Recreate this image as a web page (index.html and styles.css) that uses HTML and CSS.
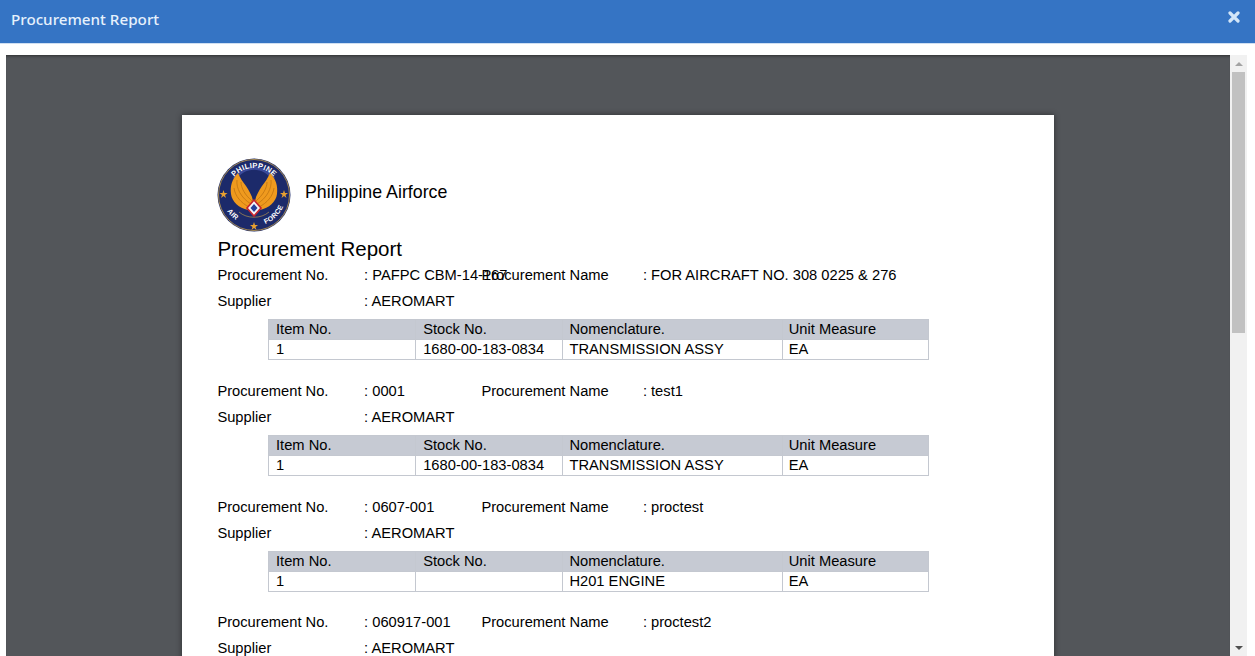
FILE: index.html
```html
<!DOCTYPE html>
<html>
<head>
  <title>Procurement Report</title>
  <link rel="stylesheet" href="styles.css">
</head>
<body>
  <div class="modal-header">
    <span class="modal-title">Procurement Report</span>
    <svg class="close-icon" width="12" height="12" viewBox="0 0 12 12">
      <path d="M2 2 L10 10 M10 2 L2 10" stroke="#d3e6f8" stroke-width="3.2" stroke-linecap="round"/>
    </svg>
  </div>
  <div class="viewer">
    <div class="viewer-area">
      <div class="page">
        <div class="brand">
          <svg class="logo" width="74" height="74" viewBox="0 0 74 74">
            <defs>
              <path id="arcTop" d="M10 37 A26.500 26.500 0 0 1 64 37"/>
              <path id="arcLeft" d="M6 42 A31 31 0 0 0 30 67"/>
              <path id="arcRight" d="M42 67.500 A31 31 0 0 0 68 42"/>
            </defs>
            <circle cx="37" cy="37" r="36.500" fill="#1c2a6a"/>
            <circle cx="37" cy="37" r="35.500" fill="none" stroke="#c9a24a" stroke-width="0.8"/>
            <path d="M16 20 A25 25 0 0 1 58 20 L55 22 A21 21 0 0 0 19 22 Z" fill="#3a4a9a"/>
            <text class="logo-text"><textPath href="#arcTop" startOffset="50%" text-anchor="middle">PHILIPPINE</textPath></text>
            <path d="M22 54 C30 61 44 61 52 54" fill="none" stroke="#c9a24a" stroke-width="0.6"/>
            <path d="M21 15 C15 21 13 28 14 36 C15 44 22 50 31 52 L35 47 L36 43 C35 37 32 33 29 28 C26 24 23 20 21 15 Z" fill="#ef9a1e"/>
            <path d="M53 15 C59 21 61 28 60 36 C59 44 52 50 43 52 L39 47 L38 43 C39 37 42 33 45 28 C48 24 51 20 53 15 Z" fill="#ef9a1e"/>
            <path d="M20 22 C19 30 24 40 34 46 M17 30 C18 38 24 45 32 49 M24 24 C24 30 28 37 35 43 M54 22 C55 30 50 40 40 46 M57 30 C56 38 50 45 42 49 M50 24 C50 30 46 37 39 43" stroke="#b96f10" stroke-width="0.7" fill="none"/>
            <path d="M37 42 L44 50 L37 58 L30 50 Z" fill="#f4f4f8" stroke="#c8242c" stroke-width="1.600"/>
            <path d="M37 46 L40.500 50 L37 54 L33.500 50 Z" fill="#27409a"/>
            <polygon class="star" points="6,33 7,36 10,36 7.500,38 8.500,41 6,39 3.500,41 4.500,38 2,36 5,36" transform="translate(0.500 -1)"/>
            <polygon class="star" points="6,33 7,36 10,36 7.500,38 8.500,41 6,39 3.500,41 4.500,38 2,36 5,36" transform="translate(61 -1)"/>
            <polygon class="star" points="6,33 7,36 10,36 7.500,38 8.500,41 6,39 3.500,41 4.500,38 2,36 5,36" transform="translate(31 31)"/>
            <text class="logo-text small"><textPath href="#arcLeft" startOffset="50%" text-anchor="middle">AIR</textPath></text>
            <text class="logo-text small"><textPath href="#arcRight" startOffset="50%" text-anchor="middle">FORCE</textPath></text>
          </svg>
          <span class="brand-name">Philippine Airforce</span>
        </div>
        <h1 class="report-title">Procurement Report</h1>

        <div class="entry">
          <div class="info-row">
            <span class="lbl">Procurement No.</span><span class="val">: PAFPC CBM-14-167</span>
            <span class="lbl2">Procurement Name</span><span class="val2">: FOR AIRCRAFT NO. 308 0225 &amp; 276</span>
          </div>
          <div class="info-row">
            <span class="lbl">Supplier</span><span class="val">: AEROMART</span>
          </div>
          <table class="items">
            <tr><th class="c1">Item No.</th><th class="c2">Stock No.</th><th class="c3">Nomenclature.</th><th class="c4">Unit Measure</th></tr>
            <tr><td>1</td><td>1680-00-183-0834</td><td>TRANSMISSION ASSY</td><td>EA</td></tr>
          </table>
        </div>

        <div class="entry">
          <div class="info-row">
            <span class="lbl">Procurement No.</span><span class="val">: 0001</span>
            <span class="lbl2">Procurement Name</span><span class="val2">: test1</span>
          </div>
          <div class="info-row">
            <span class="lbl">Supplier</span><span class="val">: AEROMART</span>
          </div>
          <table class="items">
            <tr><th class="c1">Item No.</th><th class="c2">Stock No.</th><th class="c3">Nomenclature.</th><th class="c4">Unit Measure</th></tr>
            <tr><td>1</td><td>1680-00-183-0834</td><td>TRANSMISSION ASSY</td><td>EA</td></tr>
          </table>
        </div>

        <div class="entry">
          <div class="info-row">
            <span class="lbl">Procurement No.</span><span class="val">: 0607-001</span>
            <span class="lbl2">Procurement Name</span><span class="val2">: proctest</span>
          </div>
          <div class="info-row">
            <span class="lbl">Supplier</span><span class="val">: AEROMART</span>
          </div>
          <table class="items">
            <tr><th class="c1">Item No.</th><th class="c2">Stock No.</th><th class="c3">Nomenclature.</th><th class="c4">Unit Measure</th></tr>
            <tr><td>1</td><td></td><td>H201 ENGINE</td><td>EA</td></tr>
          </table>
        </div>

        <div class="entry">
          <div class="info-row">
            <span class="lbl">Procurement No.</span><span class="val">: 060917-001</span>
            <span class="lbl2">Procurement Name</span><span class="val2">: proctest2</span>
          </div>
          <div class="info-row">
            <span class="lbl">Supplier</span><span class="val">: AEROMART</span>
          </div>
        </div>
      </div>
    </div>
    <div class="scrollbar">
      <div class="arrow up"></div>
      <div class="track"><div class="thumb"></div></div>
      <div class="arrow down"></div>
    </div>
  </div>
</body>
</html>
```

FILE: styles.css
```css
html, body {
  height: 100%;
}

body {
  margin: 0;
  background-color: #fff;
  font-family: "Liberation Sans", Arial, sans-serif;
  color: #000;
  display: flex;
  flex-direction: column;
  height: 100vh;
  overflow: hidden;
}

.modal-header {
  flex: none;
  height: 43px;
  background-color: #3574c4;
  border-bottom: 1px solid #cfdff2;
  display: flex;
  align-items: flex-start;
  justify-content: space-between;
  padding: 0 15px 0 11px;
}

.modal-title {
  font-family: "Noto Sans", sans-serif;
  font-size: 15.200px;
  font-weight: 500;
  line-height: 39px;
  color: #e6f1fc;
}

.close-icon {
  margin-top: 11px;
}

.viewer {
  flex: 1;
  min-height: 0;
  display: flex;
  padding: 11px 8px 0 6px;
}

.viewer-area {
  flex: 1;
  background-color: #53565a;
  box-shadow: inset 0 3px 3px -2px rgba(0, 0, 0, 0.45);
  overflow: hidden;
  padding-top: 60px;
}

.page {
  width: 872px;
  margin-left: 176px;
  background-color: #fff;
  box-shadow: 0 0 6px rgba(0, 0, 0, 0.45);
  padding: 43px 0 0 35.400px;
  box-sizing: border-box;
  height: 1000px;
}

.brand {
  display: flex;
  align-items: center;
  height: 74px;
}

.logo {
  flex: none;
  margin-left: -0.400px;
}

.logo-text {
  font-family: "Liberation Sans", sans-serif;
  font-size: 7.500px;
  font-weight: bold;
  fill: #fff;
  letter-spacing: 0.3px;
}

.logo-text.small {
  font-size: 7px;
}

.star {
  fill: #e8a030;
}

.brand-name {
  font-size: 17.800px;
  margin: 0 0 6px 14px;
}

.report-title {
  font-size: 20.500px;
  font-weight: normal;
  line-height: 24px;
  margin: 5px 0 1px 0;
}

.entry {
  margin-bottom: 17.800px;
}

.info-row {
  display: flex;
  white-space: nowrap;
  font-size: 14.700px;
  line-height: 26px;
}

.lbl {
  flex: none;
  width: 146.700px;
}

.val {
  flex: none;
  width: 117.300px;
}

.lbl2 {
  flex: none;
  width: 161.500px;
}

.items {
  border-collapse: collapse;
  table-layout: fixed;
  width: 661px;
  margin: 5px 0 0 50.600px;
  font-size: 14.700px;
  line-height: 17px;
}

.items th,
.items td {
  border: 1px solid #c4c8d0;
  padding: 1px 7px;
  text-align: left;
  font-weight: normal;
  height: 17px;
}

.items th {
  background-color: #c6cad3;
}

.items th:nth-child(n+3),
.items td:nth-child(n+3) {
  padding-left: 6px;
}

.c1 { width: 132px; }
.c2 { width: 132px; }
.c3 { width: 205px; }
.c4 { width: 132px; }

.scrollbar {
  flex: none;
  width: 17px;
  background-color: #f1f1f1;
  display: flex;
  flex-direction: column;
}

.arrow {
  flex: none;
  height: 17px;
  display: flex;
  align-items: center;
  justify-content: center;
}

.arrow::before {
  content: "";
  border-left: 4px solid transparent;
  border-right: 4px solid transparent;
}

.arrow.up::before {
  border-bottom: 4px solid #a3a3a3;
}

.arrow.down::before {
  border-top: 4px solid #505050;
}

.track {
  flex: 1;
  padding: 0 2px;
}

.thumb {
  height: 261px;
  background-color: #c1c1c1;
}
```
